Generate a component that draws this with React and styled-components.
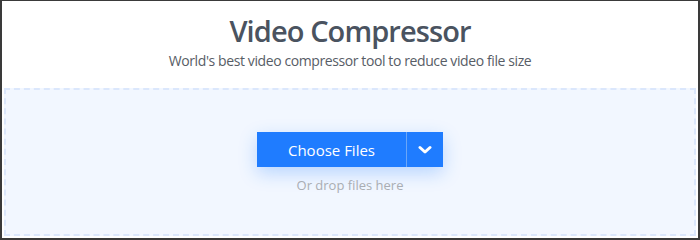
import React from "react";
import styled, { createGlobalStyle } from "styled-components";

const Global = createGlobalStyle`
  html, body { margin: 0; padding: 0; background: #fff; }
  body { font-family: "Open Sans", "Noto Sans", sans-serif; }
`;

const Frame = styled.div`
  box-sizing: border-box;
  width: 700px;
  height: 240px;
  border-style: solid;
  border-color: #3a3a3a;
  border-width: 1px 2px 2px 2px;
  padding: 0 2px 2px 2px;
  display: flex;
  flex-direction: column;
  background: #fff;
`;

const Header = styled.header`
  height: 87px;
  display: flex;
  flex-direction: column;
  align-items: center;
  box-sizing: border-box;
  padding-top: 11px;
`;

const Title = styled.h1`
  margin: 0;
  font-size: 29px;
  line-height: 38px;
  font-weight: 600;
  color: #4a5360;
  letter-spacing: -0.9px;
`;

const Subtitle = styled.p`
  margin: 1px 0 0;
  font-size: 14px;
  line-height: 20px;
  color: #575d66;
  letter-spacing: -0.4px;
`;

const Drop = styled.section`
  flex: 1;
  box-sizing: border-box;
  border: 2px dashed #dbe7fc;
  background: #f2f7ff;
  display: flex;
  flex-direction: column;
  align-items: center;
  padding-top: 42px;
`;

const ButtonGroup = styled.div`
  display: flex;
  height: 35px;
  background: #1f7cff;
  box-shadow: 0 6px 18px rgba(31, 124, 255, 0.28);
`;

const MainButton = styled.button`
  width: 149px;
  border: 0;
  background: transparent;
  color: #fff;
  font-family: inherit;
  font-size: 15px;
  padding: 0;
  cursor: pointer;
`;

const Divider = styled.span`
  width: 1px;
  background: #6aa6f8;
`;

const ToggleButton = styled.button`
  width: 36px;
  border: 0;
  background: transparent;
  display: flex;
  align-items: center;
  justify-content: center;
  padding: 0;
  cursor: pointer;
`;

const Hint = styled.div`
  margin-top: 9px;
  font-size: 13px;
  line-height: 18px;
  color: #a9adb3;
`;

export default function App() {
  return (
    <>
      <Global />
      <Frame>
        <Header>
          <Title>Video Compressor</Title>
          <Subtitle>World's best video compressor tool to reduce video file size</Subtitle>
        </Header>
        <Drop>
          <ButtonGroup>
            <MainButton>Choose Files</MainButton>
            <Divider />
            <ToggleButton aria-label="More options">
              <svg width="14" height="10" viewBox="0 0 14 10">
                <polyline points="2,2.5 7,7 12,2.5" fill="none" stroke="#fff" strokeWidth="3" strokeLinecap="round" strokeLinejoin="round" />
              </svg>
            </ToggleButton>
          </ButtonGroup>
          <Hint>Or drop files here</Hint>
        </Drop>
      </Frame>
    </>
  );
}
